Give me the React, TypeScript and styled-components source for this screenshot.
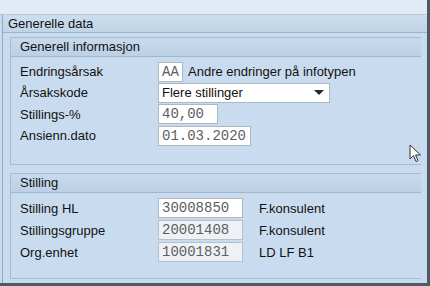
import React from "react";
import styled, { createGlobalStyle } from "styled-components";

const Global = createGlobalStyle`
  html, body { margin: 0; padding: 0; background: #c9dcef; }
  * { box-sizing: border-box; }
`;

const Screen = styled.div`
  width: 430px;
  height: 286px;
  position: relative;
  overflow: hidden;
  background: #c9dcef;
  font-family: "Liberation Sans", "DejaVu Sans", sans-serif;
  font-size: 13px;
  color: #111;
  border-right: 3px solid #4f5a66;
  border-bottom: 3px solid #4f5a66;
  display: flex;
  flex-direction: column;
`;

const TopStrip = styled.div`
  height: 15px;
  background: #e2ebf4;
  border-bottom: 1px solid #b8c8d8;
  flex: none;
`;

const Section = styled.div`
  flex: 1;
  margin-left: 2px;
  border-left: 1px solid #93a7bb;
  display: flex;
  flex-direction: column;
  background: #c9dcef;
`;

const SectionHead = styled.div`
  height: 18px;
  line-height: 17px;
  padding-left: 5px;
  background: linear-gradient(#cddeee, #c0d4e8);
  border-bottom: 1px solid #9fb3c7;
  flex: none;
`;

const SectionBody = styled.div`
  flex: 1;
  padding: 4px 6px 0 7px;
  display: flex;
  flex-direction: column;
  gap: 8px;
`;

const Group = styled.div<{ $h: number }>`
  height: ${(p) => p.$h}px;
  border: 1px solid #a8bcd0;
  border-right: none;
  display: flex;
  flex-direction: column;
  flex: none;
`;

const GroupHead = styled.div`
  height: 19px;
  line-height: 18px;
  padding-left: 9px;
  background: linear-gradient(#c7daed, #bcd0e5);
  border-bottom: 1px solid #a3b7cb;
`;

const Rows = styled.div<{ $top: number }>`
  padding: ${(p) => p.$top}px 0 0 9px;
  display: flex;
  flex-direction: column;
`;

const Row = styled.div<{ $h?: number }>`
  height: ${(p) => p.$h ?? 21}px;
  display: flex;
  align-items: center;
`;

const Label = styled.div`
  width: 138px;
  flex: none;
`;

const Field = styled.div<{ $w: number; $disabled?: boolean }>`
  width: ${(p) => p.$w}px;
  height: 20px;
  background: ${(p) => (p.$disabled ? "#eef2f6" : "#ffffff")};
  border: 1px solid ${(p) => (p.$disabled ? "#b5c0cb" : "#aeb8c2")};
  font-family: "Liberation Mono", "DejaVu Sans Mono", monospace;
  font-size: 14px;
  color: #5e5e5e;
  line-height: 18px;
  padding-left: 3px;
  flex: none;
`;

const Select = styled.div`
  width: 172px;
  height: 20px;
  background: #fff;
  border: 1px solid #aeb8c2;
  display: flex;
  align-items: center;
  justify-content: space-between;
  padding: 0 5px 0 3px;
  color: #111;
`;

const Caret = styled.span`
  width: 0;
  height: 0;
  border-left: 5px solid transparent;
  border-right: 5px solid transparent;
  border-top: 5px solid #1c2a3a;
`;

const Desc = styled.span<{ $gap: number }>`
  margin-left: ${(p) => p.$gap}px;
`;

const Cursor = styled.svg`
  position: absolute;
  left: 409px;
  top: 144px;
`;

export default function App() {
  return (
    <>
      <Global />
      <Screen>
        <TopStrip />
        <Section>
          <SectionHead>Generelle data</SectionHead>
          <SectionBody>
            <Group $h={128}>
              <GroupHead>Generell informasjon</GroupHead>
              <Rows $top={4}>
                <Row>
                  <Label>Endringsårsak</Label>
                  <Field $w={25}>AA</Field>
                  <Desc $gap={5}>Andre endringer på infotypen</Desc>
                </Row>
                <Row>
                  <Label>Årsakskode</Label>
                  <Select>
                    <span>Flere stillinger</span>
                    <Caret />
                  </Select>
                </Row>
                <Row $h={22}>
                  <Label>Stillings-%</Label>
                  <Field $w={60}>40,00</Field>
                </Row>
                <Row>
                  <Label>Ansienn.dato</Label>
                  <Field $w={93}>01.03.2020</Field>
                </Row>
              </Rows>
            </Group>
            <Group $h={106}>
              <GroupHead>Stilling</GroupHead>
              <Rows $top={4}>
                <Row $h={22}>
                  <Label>Stilling HL</Label>
                  <Field $w={85}>30008850</Field>
                  <Desc $gap={16}>F.konsulent</Desc>
                </Row>
                <Row $h={22}>
                  <Label>Stillingsgruppe</Label>
                  <Field $w={85} $disabled>20001408</Field>
                  <Desc $gap={16}>F.konsulent</Desc>
                </Row>
                <Row $h={22}>
                  <Label>Org.enhet</Label>
                  <Field $w={85} $disabled>10001831</Field>
                  <Desc $gap={16}>LD LF B1</Desc>
                </Row>
              </Rows>
            </Group>
          </SectionBody>
        </Section>
        <Cursor width="14" height="20" viewBox="0 0 14 20">
          <path d="M1 1 L1 15 L4.5 11.5 L7 17.5 L9 16.6 L6.6 11 L11.5 11 Z" fill="#fff" stroke="#333" strokeWidth="1" />
        </Cursor>
      </Screen>
    </>
  );
}
